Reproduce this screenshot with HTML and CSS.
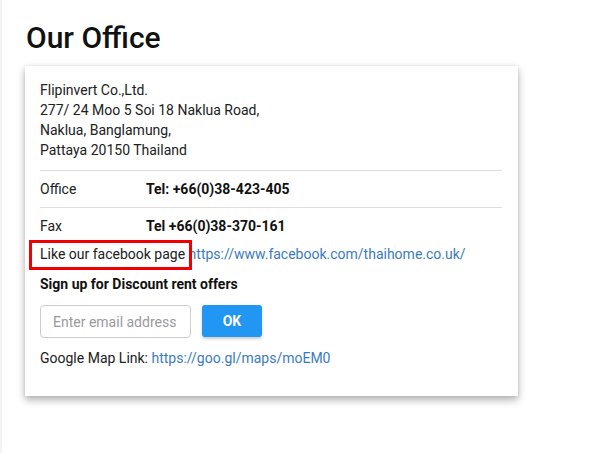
FILE: index.html
```html
<!DOCTYPE html>
<html>
<head>
<meta charset="utf-8">
<link rel="stylesheet" href="styles.css">
</head>
<body>
<div class="page">
  <h1 class="title">Our Office</h1>
  <div class="card">
    <div class="address">
      Flipinvert Co.,Ltd.<br>
      277/ 24 Moo 5 Soi 18 Naklua Road,<br>
      Naklua, Banglamung,<br>
      Pattaya 20150 Thailand
    </div>
    <div class="row row-first">
      <span class="label">Office</span>
      <span class="value">Tel: +66(0)38-423-405</span>
    </div>
    <div class="row">
      <span class="label">Fax</span>
      <span class="value">Tel +66(0)38-370-161</span>
    </div>
    <div class="line"><span class="marked">Like our facebook page</span> <a class="link" href="#">https://www.facebook.com/thaihome.co.uk/</a></div>
    <div class="signup">Sign up for Discount rent offers</div>
    <form class="subscribe">
      <input class="email" type="text" placeholder="Enter email address">
      <button class="ok" type="button">OK</button>
    </form>
    <div class="line map">Google Map Link: <a class="link" href="#">https://goo.gl/maps/moEM0</a></div>
  </div>
</div>
</body>
</html>
```

FILE: styles.css
```css
html, body {
  margin: 0;
  padding: 0;
  background: #fff;
}
body {
  font-family: Roboto, "Liberation Sans", sans-serif;
  color: #212121;
  font-size: 14px;
  line-height: 20px;
  border-left: 2px solid #f2f2f2;
  min-height: 453px;
  box-sizing: border-box;
}
.page {
  padding: 19px 0 0 23px;
}
.title {
  margin: 0 0 9px 1px;
  font-size: 30px;
  line-height: 38px;
  font-weight: 500;
  color: #111;
}
.card {
  width: 462px;
  padding: 14px 16px 28px 15px;
  background: #fff;
  box-shadow: 0 4px 8px rgba(0, 0, 0, 0.3), 0 0 4px rgba(0, 0, 0, 0.08);
}
.address {
  margin-bottom: 10px;
}
.row {
  display: flex;
  padding: 8px 0;
  border-top: 1px solid #dedede;
}
.label {
  width: 106px;
}
.value {
  font-weight: 700;
  color: #111;
}
.marked {
  position: relative;
  display: inline-block;
}
.marked::after {
  content: "";
  position: absolute;
  top: -4px;
  bottom: -6px;
  left: -11px;
  right: -7px;
  border: 3px solid #f00000;
}
.link {
  color: #3b7bc2;
  text-decoration: none;
}
.signup {
  margin-top: 10px;
  font-weight: 700;
  color: #111;
}
.subscribe {
  display: flex;
  gap: 11px;
  margin: 11px 0 10px;
}
.email {
  box-sizing: border-box;
  width: 151px;
  height: 33px;
  padding: 0 12px;
  border: 1px solid #cccccc;
  border-radius: 4px;
  font-family: Roboto, "Liberation Sans", sans-serif;
  font-size: 14px;
  color: #333;
}
.email::placeholder {
  color: #9a9a9a;
}
.ok {
  width: 60px;
  height: 32px;
  border: 0;
  border-radius: 3px;
  background: #2196f3;
  color: #fff;
  font-family: Roboto, "Liberation Sans", sans-serif;
  font-weight: 700;
  font-size: 14px;
  box-shadow: 0 2px 3px rgba(0, 0, 0, 0.2);
}
```
